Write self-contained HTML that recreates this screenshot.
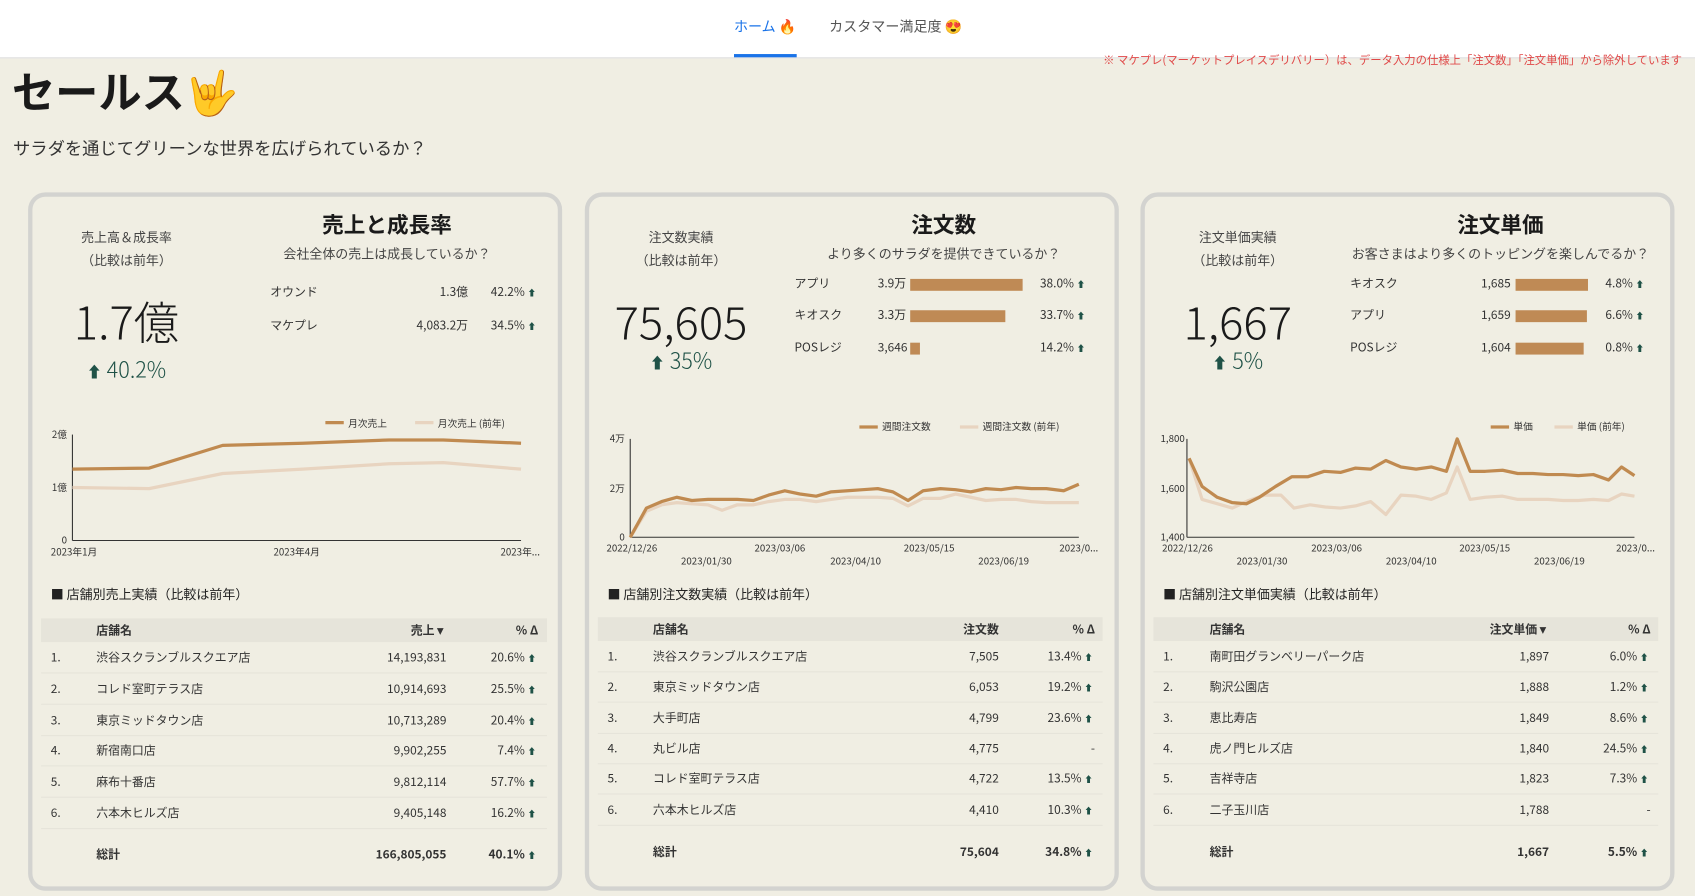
<!DOCTYPE html>
<html><head><meta charset="utf-8">
<style>
html,body{margin:0;padding:0;width:1695px;height:896px;overflow:hidden;background:#f0eee3}
#w{position:absolute;left:0;top:0;width:1568px;height:829px;transform:scale(1.081);transform-origin:0 0;font-family:"Noto Sans CJK JP","Liberation Sans",sans-serif;color:#333}
.a{position:absolute;white-space:nowrap}
.hdr{position:absolute;left:0;top:0;width:1568px;height:53px;background:#fff;border-bottom:1px solid #ddd}
.card{position:absolute;top:178px;width:486px;height:638px;border:4px solid #d3d3d0;border-radius:16px;background:#f0eee3}
.c{transform:translateX(-50%);text-align:center}
.r{transform:translateX(-100%);text-align:right}
.s12{font-size:12px;color:#444}
.s11{font-size:11px;color:#333}
.big{font-size:42px;color:#1a1a1a;font-weight:300}
.up{font-size:20px;color:#1f5247;font-weight:300}
.ttl{font-size:20px;font-weight:bold;color:#1a1a1a}
.th{position:absolute;height:22px;background:#e6e4da}
.rl{position:absolute;height:1px;background:#e6e4da}
.bar{position:absolute;height:11px;background:#bf8a55}
.ar{font-size:8px;color:#1f5247}
</style></head><body><div id="w">
<div class="hdr"></div>
<div class="a" style="left:679px;top:14px;font-size:13px;color:#1a73e8">ホーム 🔥</div>
<div class="a" style="left:679px;top:50px;width:58px;height:3px;background:#1a73e8"></div>
<div class="a" style="left:767px;top:14px;font-size:13px;color:#555">カスタマー満足度 😍</div>
<div class="a r" style="left:1556px;top:48px;font-size:10.5px;color:#e04848">※ マケプレ(マーケットプレイスデリバリー）は、データ入力の仕様上「注文数」「注文単価」から除外しています</div>
<div class="a" style="left:11px;top:54px;font-size:40px;font-weight:bold;color:#1a1a1a">セールス🤟</div>
<div class="a" style="left:12px;top:124px;font-size:16px;color:#333">サラダを通じてグリーンな世界を広げられているか？</div>

<div class="card" style="left:26px"></div>
<div class="card" style="left:541px"></div>
<div class="card" style="left:1055px"></div>

<!-- card1 -->
<div class="a c s12" style="left:117px;top:211px">売上高＆成長率</div>
<div class="a c s12" style="left:117px;top:232px">（比較は前年）</div>
<div class="a c big" style="left:117px;top:266px">1.7億</div>
<div class="a c up" style="left:117px;top:326px"><span style="font-size:14px">⬆</span> 40.2%</div>
<div class="a c ttl" style="left:358px;top:192px">売上と成長率</div>
<div class="a c s12" style="left:358px;top:226px">会社全体の売上は成長しているか？</div>
<div class="a s11" style="left:250px;top:262px">オウンド</div><div class="a r s11" style="left:433px;top:262px">1.3億</div><div class="a r s11" style="left:496px;top:262px">42.2% <span class="ar">⬆</span></div>
<div class="a s11" style="left:250px;top:293px">マケプレ</div><div class="a r s11" style="left:433px;top:293px">4,083.2万</div><div class="a r s11" style="left:496px;top:293px">34.5% <span class="ar">⬆</span></div>

<!-- card2 -->
<div class="a c s12" style="left:630px;top:211px">注文数実績</div>
<div class="a c s12" style="left:630px;top:232px">（比較は前年）</div>
<div class="a c big" style="left:630px;top:266px">75,605</div>
<div class="a c up" style="left:630px;top:318px"><span style="font-size:14px">⬆</span> 35%</div>
<div class="a c ttl" style="left:873px;top:192px">注文数</div>
<div class="a c s12" style="left:873px;top:226px">より多くのサラダを提供できているか？</div>
<div class="a s11" style="left:735px;top:254px">アプリ</div><div class="a s11" style="left:812px;top:254px">3.9万</div><div class="bar" style="left:842px;top:258px;width:104px"></div><div class="a r s11" style="left:1004px;top:254px">38.0% <span class="ar">⬆</span></div>
<div class="a s11" style="left:735px;top:283px">キオスク</div><div class="a s11" style="left:812px;top:283px">3.3万</div><div class="bar" style="left:842px;top:287px;width:88px"></div><div class="a r s11" style="left:1004px;top:283px">33.7% <span class="ar">⬆</span></div>
<div class="a s11" style="left:735px;top:313px">POSレジ</div><div class="a s11" style="left:812px;top:313px">3,646</div><div class="bar" style="left:842px;top:317px;width:9px"></div><div class="a r s11" style="left:1004px;top:313px">14.2% <span class="ar">⬆</span></div>

<!-- card3 -->
<div class="a c s12" style="left:1145px;top:211px">注文単価実績</div>
<div class="a c s12" style="left:1145px;top:232px">（比較は前年）</div>
<div class="a c big" style="left:1145px;top:266px">1,667</div>
<div class="a c up" style="left:1145px;top:318px"><span style="font-size:14px">⬆</span> 5%</div>
<div class="a c ttl" style="left:1388px;top:192px">注文単価</div>
<div class="a c s12" style="left:1388px;top:226px">お客さまはより多くのトッピングを楽しんでるか？</div>
<div class="a s11" style="left:1249px;top:254px">キオスク</div><div class="a s11" style="left:1370px;top:254px">1,685</div><div class="bar" style="left:1402px;top:258px;width:67px"></div><div class="a r s11" style="left:1521px;top:254px">4.8% <span class="ar">⬆</span></div>
<div class="a s11" style="left:1249px;top:283px">アプリ</div><div class="a s11" style="left:1370px;top:283px">1,659</div><div class="bar" style="left:1402px;top:287px;width:66px"></div><div class="a r s11" style="left:1521px;top:283px">6.6% <span class="ar">⬆</span></div>
<div class="a s11" style="left:1249px;top:313px">POSレジ</div><div class="a s11" style="left:1370px;top:313px">1,604</div><div class="bar" style="left:1402px;top:317px;width:63px"></div><div class="a r s11" style="left:1521px;top:313px">0.8% <span class="ar">⬆</span></div>

<!-- charts -->
<svg class="a" style="left:0;top:0" width="1568" height="829" font-family="Noto Sans CJK JP, Liberation Sans, sans-serif" font-size="9" fill="#333">
<g fill="none" stroke-width="3" stroke-linejoin="round">
<line x1="67" y1="402" x2="67" y2="500" stroke="#333" stroke-width="1"/><line x1="67" y1="500" x2="482" y2="500" stroke="#333" stroke-width="1"/>
<polyline stroke="#e8d4c0" points="67,451 138,452 206,438 280,434 360,429 410,428 482,434"/>
<polyline stroke="#c08a50" points="67,434 138,433 206,412 280,410 360,407 410,407 482,410"/>
<line x1="301" y1="391" x2="318" y2="391" stroke="#c08a50"/><line x1="384" y1="391" x2="401" y2="391" stroke="#e8d4c0"/>

<line x1="583" y1="406" x2="583" y2="497" stroke="#333" stroke-width="1"/><line x1="583" y1="497" x2="998" y2="497" stroke="#333" stroke-width="1"/>
<polyline stroke="#e8d4c0" points="583,497 598,473 612,467 626,465 640,466 655,467 668,472 682,467 697,467 711,464 726,462 740,462 755,464 769,462 784,460 798,460 812,460 826,461 840,468 854,461 870,461 884,457 898,460 912,463 926,462 940,462 954,464 968,465 984,465 998,465"/>
<polyline stroke="#c08a50" points="583,497 598,470 612,464 626,460 640,463 655,462 668,462 682,462 697,463 711,458 726,454 740,457 755,459 769,455 784,454 798,453 812,452 826,455 840,463 854,454 870,452 884,453 898,455 912,452 926,453 940,451 954,452 968,452 984,454 998,448"/>
<line x1="795" y1="395" x2="812" y2="395" stroke="#c08a50"/><line x1="888" y1="395" x2="905" y2="395" stroke="#e8d4c0"/>

<line x1="1098" y1="406" x2="1098" y2="497" stroke="#333" stroke-width="1"/><line x1="1098" y1="497" x2="1512" y2="497" stroke="#333" stroke-width="1"/>
<polyline stroke="#e8d4c0" points="1100,424 1112,462 1126,466 1140,470 1155,463 1170,458 1185,458 1197,470 1212,467 1226,469 1240,470 1254,468 1268,464 1282,476 1296,458 1310,459 1324,462 1338,456 1348,432 1360,462 1374,460 1390,459 1404,462 1418,462 1432,462 1446,463 1460,463 1474,462 1488,463 1500,457 1512,459"/>
<polyline stroke="#c08a50" points="1100,424 1112,450 1126,460 1140,465 1153,466 1165,460 1180,450 1195,441 1210,441 1225,436 1240,437 1254,433 1268,434 1282,426 1296,432 1310,434 1324,432 1338,436 1348,406 1360,436 1374,436 1390,435 1404,438 1418,438 1432,439 1446,439 1460,440 1474,439 1488,444 1500,432 1512,440"/>
<line x1="1379" y1="395" x2="1396" y2="395" stroke="#c08a50"/><line x1="1438" y1="395" x2="1455" y2="395" stroke="#e8d4c0"/>
</g>
<text x="322" y="395">月次売上</text><text x="405" y="395">月次売上 (前年)</text>
<text x="62" y="405" text-anchor="end">2億</text><text x="62" y="454" text-anchor="end">1億</text><text x="62" y="503" text-anchor="end">0</text>
<text x="47" y="514">2023年1月</text><text x="253" y="514">2023年4月</text><text x="463" y="514">2023年...</text>
<text x="816" y="398">週間注文数</text><text x="909" y="398">週間注文数 (前年)</text>
<text x="578" y="409" text-anchor="end">4万</text><text x="578" y="455" text-anchor="end">2万</text><text x="578" y="500" text-anchor="end">0</text>
<text x="561" y="510">2022/12/26</text><text x="698" y="510">2023/03/06</text><text x="836" y="510">2023/05/15</text><text x="980" y="510">2023/0...</text>
<text x="630" y="522">2023/01/30</text><text x="768" y="522">2023/04/10</text><text x="905" y="522">2023/06/19</text>
<text x="1400" y="398">単価</text><text x="1459" y="398">単価 (前年)</text>
<text x="1096" y="409" text-anchor="end">1,800</text><text x="1096" y="455" text-anchor="end">1,600</text><text x="1096" y="500" text-anchor="end">1,400</text>
<text x="1075" y="510">2022/12/26</text><text x="1213" y="510">2023/03/06</text><text x="1350" y="510">2023/05/15</text><text x="1495" y="510">2023/0...</text>
<text x="1144" y="522">2023/01/30</text><text x="1282" y="522">2023/04/10</text><text x="1419" y="522">2023/06/19</text>
</svg>

<!-- tables card1 -->
<div class="a" style="left:47px;top:541px;font-size:12px;color:#222">■ 店舗別売上実績（比較は前年）</div>
<div class="th" style="left:38px;top:572px;width:468px"></div>
<div class="a s11" style="left:89px;top:575px;font-weight:bold">店舗名</div>
<div class="a r s11" style="left:410px;top:575px;font-weight:bold">売上 ▾</div>
<div class="a r s11" style="left:498px;top:575px;font-weight:bold">% Δ</div>

<div class="a s11" style="left:47px;top:600px">1.</div><div class="a s11" style="left:89px;top:600px">渋谷スクランブルスクエア店</div><div class="a r s11" style="left:413px;top:600px">14,193,831</div><div class="a r s11" style="left:496px;top:600px">20.6% <span class="ar">⬆</span></div>
<div class="rl" style="left:38px;top:622px;width:468px"></div>
<div class="a s11" style="left:47px;top:629px">2.</div><div class="a s11" style="left:89px;top:629px">コレド室町テラス店</div><div class="a r s11" style="left:413px;top:629px">10,914,693</div><div class="a r s11" style="left:496px;top:629px">25.5% <span class="ar">⬆</span></div>
<div class="rl" style="left:38px;top:651px;width:468px"></div>
<div class="a s11" style="left:47px;top:658px">3.</div><div class="a s11" style="left:89px;top:658px">東京ミッドタウン店</div><div class="a r s11" style="left:413px;top:658px">10,713,289</div><div class="a r s11" style="left:496px;top:658px">20.4% <span class="ar">⬆</span></div>
<div class="rl" style="left:38px;top:680px;width:468px"></div>
<div class="a s11" style="left:47px;top:686px">4.</div><div class="a s11" style="left:89px;top:686px">新宿南口店</div><div class="a r s11" style="left:413px;top:686px">9,902,255</div><div class="a r s11" style="left:496px;top:686px">7.4% <span class="ar">⬆</span></div>
<div class="rl" style="left:38px;top:708px;width:468px"></div>
<div class="a s11" style="left:47px;top:715px">5.</div><div class="a s11" style="left:89px;top:715px">麻布十番店</div><div class="a r s11" style="left:413px;top:715px">9,812,114</div><div class="a r s11" style="left:496px;top:715px">57.7% <span class="ar">⬆</span></div>
<div class="rl" style="left:38px;top:737px;width:468px"></div>
<div class="a s11" style="left:47px;top:744px">6.</div><div class="a s11" style="left:89px;top:744px">六本木ヒルズ店</div><div class="a r s11" style="left:413px;top:744px">9,405,148</div><div class="a r s11" style="left:496px;top:744px">16.2% <span class="ar">⬆</span></div>
<div class="rl" style="left:38px;top:766px;width:468px"></div>
<div class="a s11" style="left:89px;top:782px;font-weight:bold">総計</div><div class="a r s11" style="left:413px;top:782px;font-weight:bold">166,805,055</div><div class="a r s11" style="left:496px;top:782px;font-weight:bold">40.1% <span class="ar">⬆</span></div>

<!-- table card2 -->
<div class="a" style="left:562px;top:541px;font-size:12px;color:#222">■ 店舗別注文数実績（比較は前年）</div>
<div class="th" style="left:553px;top:571px;width:467px"></div>
<div class="a s11" style="left:604px;top:574px;font-weight:bold">店舗名</div>
<div class="a r s11" style="left:924px;top:574px;font-weight:bold">注文数</div>
<div class="a r s11" style="left:1013px;top:574px;font-weight:bold">% Δ</div>
<div class="a s11" style="left:562px;top:599px">1.</div><div class="a s11" style="left:604px;top:599px">渋谷スクランブルスクエア店</div><div class="a r s11" style="left:924px;top:599px">7,505</div><div class="a r s11" style="left:1011px;top:599px">13.4% <span class="ar">⬆</span></div>
<div class="rl" style="left:553px;top:621px;width:467px"></div>
<div class="a s11" style="left:562px;top:627px">2.</div><div class="a s11" style="left:604px;top:627px">東京ミッドタウン店</div><div class="a r s11" style="left:924px;top:627px">6,053</div><div class="a r s11" style="left:1011px;top:627px">19.2% <span class="ar">⬆</span></div>
<div class="rl" style="left:553px;top:649px;width:467px"></div>
<div class="a s11" style="left:562px;top:656px">3.</div><div class="a s11" style="left:604px;top:656px">大手町店</div><div class="a r s11" style="left:924px;top:656px">4,799</div><div class="a r s11" style="left:1011px;top:656px">23.6% <span class="ar">⬆</span></div>
<div class="rl" style="left:553px;top:678px;width:467px"></div>
<div class="a s11" style="left:562px;top:684px">4.</div><div class="a s11" style="left:604px;top:684px">丸ビル店</div><div class="a r s11" style="left:924px;top:684px">4,775</div><div class="a r s11" style="left:1013px;top:684px">-</div>
<div class="rl" style="left:553px;top:706px;width:467px"></div>
<div class="a s11" style="left:562px;top:712px">5.</div><div class="a s11" style="left:604px;top:712px">コレド室町テラス店</div><div class="a r s11" style="left:924px;top:712px">4,722</div><div class="a r s11" style="left:1011px;top:712px">13.5% <span class="ar">⬆</span></div>
<div class="rl" style="left:553px;top:734px;width:467px"></div>
<div class="a s11" style="left:562px;top:741px">6.</div><div class="a s11" style="left:604px;top:741px">六本木ヒルズ店</div><div class="a r s11" style="left:924px;top:741px">4,410</div><div class="a r s11" style="left:1011px;top:741px">10.3% <span class="ar">⬆</span></div>
<div class="rl" style="left:553px;top:763px;width:467px"></div>
<div class="a s11" style="left:604px;top:780px;font-weight:bold">総計</div><div class="a r s11" style="left:924px;top:780px;font-weight:bold">75,604</div><div class="a r s11" style="left:1011px;top:780px;font-weight:bold">34.8% <span class="ar">⬆</span></div>

<!-- table card3 -->
<div class="a" style="left:1076px;top:541px;font-size:12px;color:#222">■ 店舗別注文単価実績（比較は前年）</div>
<div class="th" style="left:1067px;top:571px;width:467px"></div>
<div class="a s11" style="left:1119px;top:574px;font-weight:bold">店舗名</div>
<div class="a r s11" style="left:1430px;top:574px;font-weight:bold">注文単価 ▾</div>
<div class="a r s11" style="left:1527px;top:574px;font-weight:bold">% Δ</div>
<div class="a s11" style="left:1076px;top:599px">1.</div><div class="a s11" style="left:1119px;top:599px">南町田グランベリーパーク店</div><div class="a r s11" style="left:1433px;top:599px">1,897</div><div class="a r s11" style="left:1525px;top:599px">6.0% <span class="ar">⬆</span></div>
<div class="rl" style="left:1067px;top:621px;width:467px"></div>
<div class="a s11" style="left:1076px;top:627px">2.</div><div class="a s11" style="left:1119px;top:627px">駒沢公園店</div><div class="a r s11" style="left:1433px;top:627px">1,888</div><div class="a r s11" style="left:1525px;top:627px">1.2% <span class="ar">⬆</span></div>
<div class="rl" style="left:1067px;top:649px;width:467px"></div>
<div class="a s11" style="left:1076px;top:656px">3.</div><div class="a s11" style="left:1119px;top:656px">恵比寿店</div><div class="a r s11" style="left:1433px;top:656px">1,849</div><div class="a r s11" style="left:1525px;top:656px">8.6% <span class="ar">⬆</span></div>
<div class="rl" style="left:1067px;top:678px;width:467px"></div>
<div class="a s11" style="left:1076px;top:684px">4.</div><div class="a s11" style="left:1119px;top:684px">虎ノ門ヒルズ店</div><div class="a r s11" style="left:1433px;top:684px">1,840</div><div class="a r s11" style="left:1525px;top:684px">24.5% <span class="ar">⬆</span></div>
<div class="rl" style="left:1067px;top:706px;width:467px"></div>
<div class="a s11" style="left:1076px;top:712px">5.</div><div class="a s11" style="left:1119px;top:712px">吉祥寺店</div><div class="a r s11" style="left:1433px;top:712px">1,823</div><div class="a r s11" style="left:1525px;top:712px">7.3% <span class="ar">⬆</span></div>
<div class="rl" style="left:1067px;top:734px;width:467px"></div>
<div class="a s11" style="left:1076px;top:741px">6.</div><div class="a s11" style="left:1119px;top:741px">二子玉川店</div><div class="a r s11" style="left:1433px;top:741px">1,788</div><div class="a r s11" style="left:1527px;top:741px">-</div>
<div class="rl" style="left:1067px;top:763px;width:467px"></div>
<div class="a s11" style="left:1119px;top:780px;font-weight:bold">総計</div><div class="a r s11" style="left:1433px;top:780px;font-weight:bold">1,667</div><div class="a r s11" style="left:1525px;top:780px;font-weight:bold">5.5% <span class="ar">⬆</span></div>
</div></body></html>
